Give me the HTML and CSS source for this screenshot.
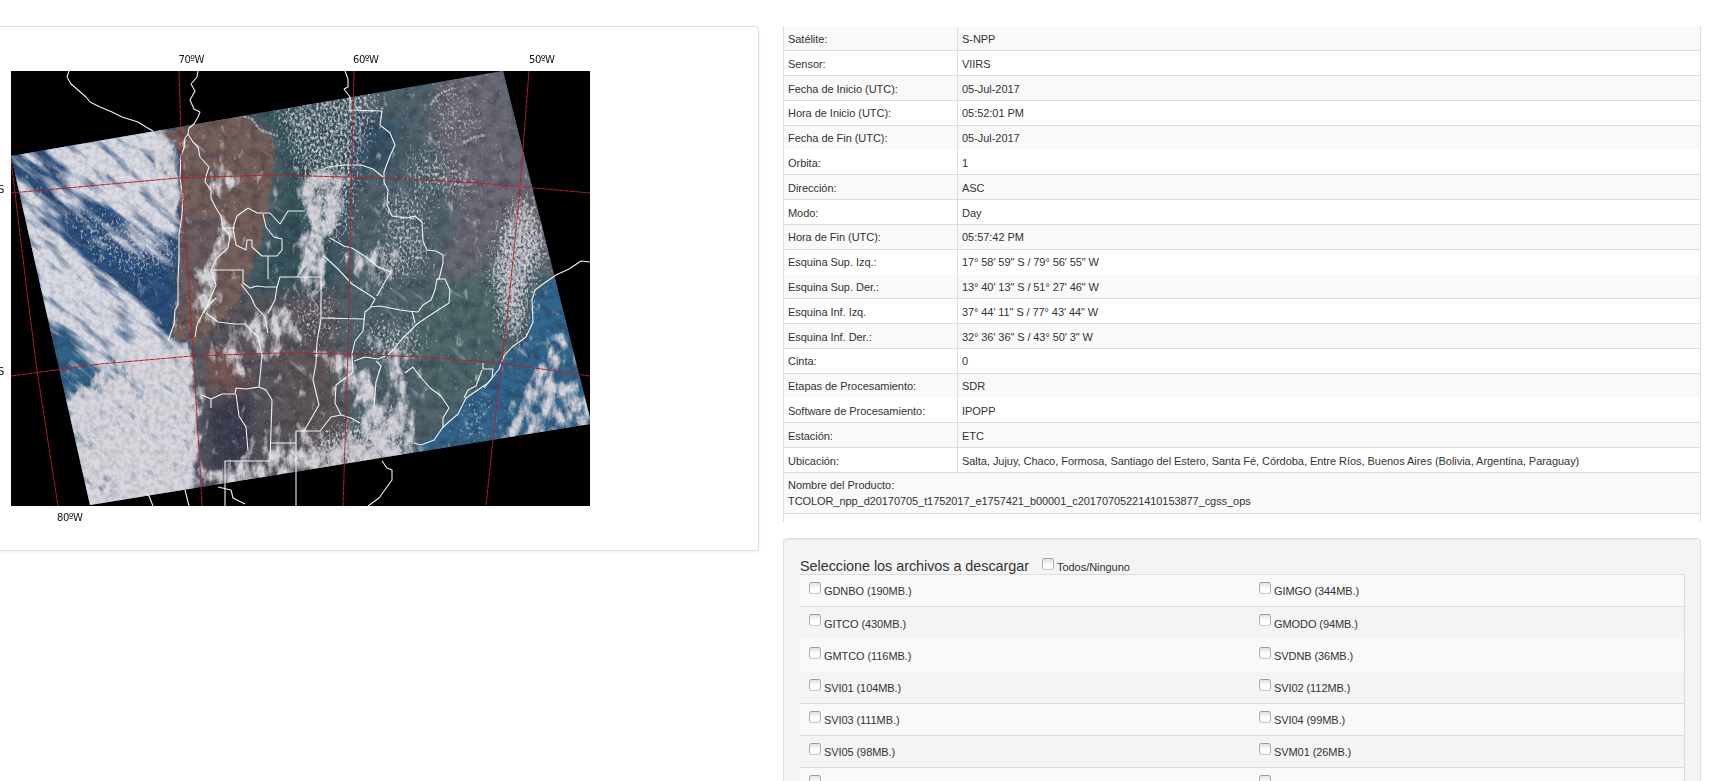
FILE: index.html
```
<!DOCTYPE html>
<html lang="es">
<head>
<meta charset="utf-8">
<title>Detalle del producto</title>
<link rel="stylesheet" href="styles.css">
</head>
<body>
<main class="page">
<section class="preview">
<svg class="map" viewBox="0 27 758 523" width="758" height="523">
  <defs>
    <clipPath id="swath"><path d="M11 156 503 71 590 418V424L90 505Z"/></clipPath>
    <clipPath id="frame"><path d="M11 71H590V506H11Z"/></clipPath>
    <filter id="soft" x="-10%" y="-10%" width="120%" height="120%"><feGaussianBlur stdDeviation="7"/></filter>
    <filter id="edge" x="-5%" y="-5%" width="110%" height="110%"><feTurbulence type="fractalNoise" baseFrequency=".15" numOctaves="3" seed="4"/><feDisplacementMap in="SourceGraphic" scale="9" xChannelSelector="R" yChannelSelector="G"/></filter>
    <filter id="wisps" filterUnits="userSpaceOnUse" x="-50" y="-250" width="750" height="850" color-interpolation-filters="sRGB">
      <feGaussianBlur in="SourceAlpha" stdDeviation="6" result="d"/>
      <feTurbulence type="fractalNoise" baseFrequency=".025 .1" numOctaves="6" seed="8" result="n"/>
      <feComposite in="d" in2="n" operator="arithmetic" k2=".66" k3="1" k4="-.2"/>
      <feColorMatrix values="0 0 0 0 .86  0 0 0 0 .86  0 0 0 0 .89  0 0 0 2.5 -1.35"/>
    </filter>
    <filter id="cloud" filterUnits="userSpaceOnUse" x="0" y="60" width="600" height="460" color-interpolation-filters="sRGB">
      <feGaussianBlur in="SourceAlpha" stdDeviation="5" result="d"/>
      <feTurbulence type="fractalNoise" baseFrequency=".11 .06" numOctaves="6" seed="8" result="n"/>
      <feComposite in="d" in2="n" operator="arithmetic" k2=".6" k3="1.25" k4="-.3"/>
      <feColorMatrix values="0 0 0 0 .85  0 0 0 0 .84  0 0 0 0 .86  0 0 0 2.5 -1.4"/>
    </filter>
    <filter id="speck" filterUnits="userSpaceOnUse" x="0" y="60" width="600" height="460" color-interpolation-filters="sRGB">
      <feGaussianBlur in="SourceAlpha" stdDeviation="9" result="d"/>
      <feTurbulence type="fractalNoise" baseFrequency=".42 .3" numOctaves="4" seed="21" result="n"/>
      <feComposite in="d" in2="n" operator="arithmetic" k2=".55" k3="1" k4="-.1"/>
      <feColorMatrix values="0 0 0 0 .8  0 0 0 0 .79  0 0 0 0 .81  0 0 0 3 -1.85"/>
    </filter>
    <filter id="grain" filterUnits="userSpaceOnUse" x="0" y="60" width="600" height="460" color-interpolation-filters="sRGB">
      <feTurbulence type="fractalNoise" baseFrequency=".1" numOctaves="6" seed="3"/>
      <feColorMatrix values="0 0 0 0 .12  0 0 0 0 .13  0 0 0 0 .18  0 2.4 0 0 -.95"/>
    </filter>
    <filter id="haze" filterUnits="userSpaceOnUse" x="0" y="60" width="600" height="460" color-interpolation-filters="sRGB">
      <feTurbulence type="fractalNoise" baseFrequency=".2" numOctaves="4" seed="15"/>
      <feColorMatrix values="0 0 0 0 .38  0 0 0 0 .42  0 0 0 0 .52  0 3 0 0 -1.2"/>
    </filter>
  </defs>

  <rect x="11" y="71" width="579" height="435" fill="#000"/>
  <g clip-path="url(#swath)">
    <rect x="0" y="60" width="600" height="460" fill="#4f636b"/>
    <g filter="url(#soft)">
      <path fill="#274d7c" d="M0 60H180V340L195 520H0Z"/>
      <path fill="#2d6288" d="M40 320 170 350 130 420 60 420Z"/>
      <path fill="#36525a" d="M235 100 340 80 360 100 360 180 330 300 250 300 285 190 275 130Z"/>
      <path fill="#334f62" d="M350 115 400 120 390 170 350 165Z"/>
      <path fill="#6c6a73" d="M440 75 505 65 560 280 510 225 475 290 435 280 455 220 430 120Z"/>
      <path fill="#4d6769" d="M420 290 520 260 500 380 430 420 400 340Z"/>
      <path fill="#5c575c" d="M200 300 340 290 340 480 200 500Z"/>
      <path fill="#5e5455" d="M275 355 335 350 345 430 290 440Z"/>
      <path fill="#3b3a4e" d="M208 400 255 390 252 465 210 480Z"/>
      <path fill="#775650" d="M205 345 235 355 250 385 228 398 205 385Z"/>
    </g>
    <g filter="url(#edge)">
      <path fill="#775f58" d="M156 132 240 112 262 128 275 140 270 200 260 245 248 278 238 298 222 320 200 340 190 345 182 340 170 342 178 300 182 150Z"/>
      <path fill="#6d5b5b" d="M183 210 220 220 210 300 175 330Z"/>
      <path fill="#2f658c" d="M600 276 565 272 540 287 532 295 530 325 522 342 502 358 485 384 464 401 440 430 420 446 395 500 600 500Z"/>
    </g>
    <rect filter="url(#grain)" x="0" y="60" width="600" height="460" opacity=".35"/>
    <g transform="rotate(38)" filter="url(#wisps)">
      <g transform="rotate(-38)">
        <path d="M40 130 155 118 176 150 178 235 160 240 138 228 105 206 70 180Z"/>
        <path opacity=".58" d="M0 140 100 130 130 205 60 210 15 215Z"/>
        <path opacity=".5" d="M60 205 180 220 176 270 100 250Z"/>
        <path d="M10 205 60 210 68 245 105 275 145 305 172 340 190 350 192 385 160 378 120 362 80 342 45 325 30 270Z"/>
        <path opacity=".62" d="M75 335 140 345 150 400 60 400Z"/>
        <path d="M65 400 120 390 150 355 190 345 196 480 190 515 80 525Z"/>
        <path d="M65 405 120 390 150 355 188 350 194 470 190 515 80 525Z"/>
      </g>
    </g>
    <g filter="url(#cloud)">
      <path d="M125 350 192 345 200 400 200 505 100 520 60 410Z"/>
      <path d="M150 130 178 148 177 215 164 215Z"/>
      <path d="M210 160 239 176 237 195 214 192Z"/>
      <path d="M212 215 234 225 232 245 214 270 220 300 205 330 194 300 200 268 220 242Z"/>
      <path d="M298 168 347 175 339 225 325 245 322 295 304 298 296 260 306 235Z"/>
      <path opacity=".9" d="M306 185 336 185 332 225 320 240 312 235Z"/>
      <path opacity=".8" d="M222 330 270 308 302 312 302 345 265 358 245 345Z"/>
      <path opacity=".8" d="M215 340 240 345 247 380 235 375 215 358Z"/>
      <path opacity=".55" d="M260 375 310 390 315 425 270 430 245 455 200 480 240 495 320 475 320 410Z"/>
      <path opacity=".5" d="M210 470 300 440 320 470 220 495Z"/>
      <path d="M310 350 345 355 372 378 376 395 395 420 408 470 315 495 312 455 365 430 350 390Z"/>
      <path opacity=".65" d="M370 240 400 255 385 290 360 275Z"/>
      <path opacity=".6" d="M340 240 365 260 375 285 350 270Z"/>
      <path opacity=".75" d="M375 340 408 350 410 400 420 455 390 465 392 400Z"/>
      <path opacity=".78" d="M560 305 570 340 560 370 595 390 595 425 540 440 495 445 520 400 535 365 555 345Z"/>
    </g>
    <g filter="url(#speck)">
      <path opacity=".6" d="M270 105 360 80 385 85 360 170 350 240 310 240 300 180Z"/>
      <path opacity=".5" d="M405 150 435 150 470 165 480 200 450 200 410 190Z"/>
      <path opacity=".55" d="M380 185 430 200 425 235 435 270 370 290 385 215Z"/>
      <path opacity=".9" d="M503 215 530 190 549 250 530 285 524 345 503 335 489 270Z"/>
      <path opacity=".55" d="M360 325 420 315 420 365 370 360Z"/>
      <path opacity=".42" d="M285 300 330 280 340 340 300 345Z"/>
      <path opacity=".38" d="M430 85 470 85 490 145 430 145Z"/>
      <path opacity=".48" d="M465 405 490 385 480 440 460 445Z"/>
      <path opacity=".7" d="M308 440 400 400 415 460 310 480Z"/>
      <path opacity=".45" d="M60 205 150 220 178 235 176 270 130 280 80 240Z"/>
    </g>
    <path filter="url(#haze)" d="M0 60H600V520H0Z" opacity=".2"/>
    <g class="streak"><path d="M240 115 252 119 260 130 278 136"/><path d="M430 105 438 95 453 88"/><path d="M463 143 475 137 486 135"/></g>
  </g>

  <g class="borders" clip-path="url(#frame)">
    <path d="M69 71 67 77 71 84 78 90 86 97 90 102 100 107 112 112 122 117 138 122 146 127 153 131"/>
    <path d="M198 71 197 77 191 84 195 91 190 100 194 109 200 112 198 117 194 124 189 128 188 134 193 142 198 147 200 157 209 167 206 176 205 182 211 190 211 198 216 208 221 216 223 228 230 235 228 248 217 258 211 270 216 285 204 313"/>
    <path d="M188 134 185 138 184 148 181 156 180 178 183 197 182 215 179 235 179 258 178 280 178 305 175 310 174 324 168 341"/>
    <path d="M345 71 348 79 348 87 344 89 350 97 350 110 382 111 380 125 390 133 395 145 390 156 384 172 384 182 388 190 387 205 392 216 407 218 415 216 422 222 423 241 427 250 436 251 443 255 443 263 439 279 437 279 435 290 431 300 423 305 418 312 408 311 400 310 380 306 371 307"/>
    <path d="M321 170 328 167 344 165 361 165 373 169 383 177"/>
    <path d="M437 279 445 279 450 290 449 303 435 312 426 318 417 324 409 332 401 340 393 350 388 355 378 359 365 357 354 361"/>
    <path d="M412 311 415 323"/><path d="M248 208 257 213 270 213 280 224 288 211 305 211"/>
    <path d="M248 208 237 216 233 228 236 245 246 250 247 240 252 240 252 247 262 256 277 256 282 250 282 239 274 237 266 227 263 214"/>
    <path d="M222 228 235 228M212 270 243 270 243 283 250 288 257 286 265 287 277 287 280 277 297 277 322 277M268 256 268 279M297 277 307 263M321 277V318L317 342 316 363 313 380 319 405 304 431"/>
    <path d="M330 238 344 246 352 248 366 257 378 267 391 272M324 256 337 268 352 284 371 296 375 299 370 308 365 312 363 331 355 341 352 354 353 372M391 272 386 280 377 296M321 318 365 319M353 372 344 379 336 385 335 403 341 415 331 417 320 431H296V506"/>
    <path d="M216 298 205 309 197 325 195 337M206 313 218 322 235 324 245 324 258 337 262 356 259 387M241 284 251 297 255 306 265 317 268 333M277 287 275 300 268 313M202 395 211 399 222 394 235 394 236 388 246 389 259 387 266 390 272 400 270 460M270 443H296M270 461H225V506M236 394 239 416 246 427 248 451M211 399V408"/>
    <path d="M376 361 381 366 376 382 374 406M341 415 351 418 360 423M405 373 413 367 418 374 430 388 441 396 449 408 443 418 443 428"/>
    <path d="M590 262 581 261 569 269 556 275 543 284 535 290 532 300 533 322 526 337 512 347 504 356 499 369 488 383 466 398 458 414 443 427 434 440 421 445 414 443"/>
    <path d="M483 363 483 369 493 369 492 378 484 388M482 370 476 386 468 390 464 398M145 493 149 496 153 506M185 490 189 506M218 487 231 490 233 498 245 504M382 461 387 468 392 470 392 480 379 498 368 506"/>
  </g>
  <g class="grid" clip-path="url(#frame)">
    <path d="M179 71 183 200 190 300 199 450 202 506M354 71 351 200 348 350 343 506M529 71 519 200 509 300 494 430 486 506M11 160 28 300 37 370 58 506"/>
    <path d="M11 193 100 185 178 178 270 175 385 178 480 183 590 193M11 376 100 364 192 356 280 353 350 354 420 357 500 363 590 376"/>
  </g>
  <g class="axis">
    <text x="178.500" y="63" textLength="26">70ºW</text>
    <text x="353" y="63" textLength="26">60ºW</text>
    <text x="529" y="63" textLength="26">50ºW</text>
    <text x="57" y="521" textLength="26">80ºW</text>
    <text x="-2" y="193">S</text>
    <text x="-2" y="375">S</text>
  </g>
</svg>
</section>

<section class="details">
  <dl class="info">
    <div class="row"><dt>Satélite:</dt><dd>S-NPP</dd></div>
    <div class="row"><dt>Sensor:</dt><dd>VIIRS</dd></div>
    <div class="row"><dt>Fecha de Inicio (UTC):</dt><dd>05-Jul-2017</dd></div>
    <div class="row"><dt>Hora de Inicio (UTC):</dt><dd>05:52:01 PM</dd></div>
    <div class="row"><dt>Fecha de Fin (UTC):</dt><dd>05-Jul-2017</dd></div>
    <div class="row plain"><dt>Orbita:</dt><dd>1</dd></div>
    <div class="row"><dt>Dirección:</dt><dd>ASC</dd></div>
    <div class="row"><dt>Modo:</dt><dd>Day</dd></div>
    <div class="row"><dt>Hora de Fin (UTC):</dt><dd>05:57:42 PM</dd></div>
    <div class="row"><dt>Esquina Sup. Izq.:</dt><dd class="coords">17° 58' 59" S / 79° 56' 55" W</dd></div>
    <div class="row plain"><dt>Esquina Sup. Der.:</dt><dd class="coords">13° 40' 13" S / 51° 27' 46" W</dd></div>
    <div class="row"><dt>Esquina Inf. Izq.</dt><dd class="coords">37° 44' 11" S / 77° 43' 44" W</dd></div>
    <div class="row"><dt>Esquina Inf. Der.:</dt><dd class="coords">32° 36' 36" S / 43° 50' 3" W</dd></div>
    <div class="row"><dt>Cinta:</dt><dd>0</dd></div>
    <div class="row"><dt>Etapas de Procesamiento:</dt><dd>SDR</dd></div>
    <div class="row plain"><dt>Software de Procesamiento:</dt><dd>IPOPP</dd></div>
    <div class="row"><dt>Estación:</dt><dd>ETC</dd></div>
    <div class="row"><dt>Ubicación:</dt><dd>Salta, Jujuy, Chaco, Formosa, Santiago del Estero, Santa Fé, Córdoba, Entre Ríos, Buenos Aires (Bolivia, Argentina, Paraguay)</dd></div>
    <div class="product"><dt>Nombre del Producto:</dt><dd>TCOLOR_npp_d20170705_t1752017_e1757421_b00001_c20170705221410153877_cgss_ops</dd></div>
    <div class="tail"></div>
  </dl>

  <form class="well">
    <div class="heading"><h2>Seleccione los archivos a descargar</h2><label><input type="checkbox"><span>Todos/Ninguno</span></label></div>
    <div class="files">
      <div class="pair"><label><input type="checkbox"><span>GDNBO (190MB.)</span></label><label><input type="checkbox"><span>GIMGO (344MB.)</span></label></div>
      <div class="pair"><label><input type="checkbox"><span>GITCO (430MB.)</span></label><label><input type="checkbox"><span>GMODO (94MB.)</span></label></div>
      <div class="pair plain"><label><input type="checkbox"><span>GMTCO (116MB.)</span></label><label><input type="checkbox"><span>SVDNB (36MB.)</span></label></div>
      <div class="pair plain"><label><input type="checkbox"><span>SVI01 (104MB.)</span></label><label><input type="checkbox"><span>SVI02 (112MB.)</span></label></div>
      <div class="pair"><label><input type="checkbox"><span>SVI03 (111MB.)</span></label><label><input type="checkbox"><span>SVI04 (99MB.)</span></label></div>
      <div class="pair"><label><input type="checkbox"><span>SVI05 (98MB.)</span></label><label><input type="checkbox"><span>SVM01 (26MB.)</span></label></div>
      <div class="pair"><label><input type="checkbox"><span>SVM02 (26MB.)</span></label><label><input type="checkbox"><span>SVM03 (26MB.)</span></label></div>
    </div>
  </form>
</section>
</main>
</body>
</html>
```
FILE: styles.css
```
* { box-sizing: border-box; }
html, body { height: 100%; overflow: hidden; }
body {
  margin: 0;
  background: #fff;
  color: #333;
  font: 11px/16px "Liberation Sans", Arial, sans-serif;
  letter-spacing: -.04px;
}
.page {
  display: flex;
  align-items: flex-start;
  gap: 24px;
  height: 781px;
}
.preview {
  flex: none;
  width: 759px;
  height: 525px;
  margin-top: 26px;
  border: 1px solid #ddd;
  border-left: 0;
  border-radius: 0 4px 4px 0;
  box-shadow: 0 1px 3px rgba(0, 0, 0, .075);
}
.map { display: block; }
.borders path { fill: none; stroke: #eef4f4; stroke-width: 1.1; stroke-linejoin: bevel; }
.grid path { fill: none; stroke: #b51f2c; stroke-width: 1; stroke-dasharray: 5 .6; }
.streak path { fill: none; stroke: #cfd3d5; stroke-width: 2.5; stroke-dasharray: 2 1 4 1; opacity: .6; }
.axis text { font: 10px "DejaVu Sans", sans-serif; letter-spacing: 0; fill: #111; }

.details { flex: none; width: 918px; padding-top: 25.6px; }
.info { margin: 0; border: solid #ddd; border-width: 0 1px; }
.info dd { margin: 0; }
.row {
  display: grid;
  grid-template-columns: 173px 1fr;
  height: 24.8px;
  border-top: 1px solid #ddd;
}
.row:first-child, .row.plain { border-top-color: transparent; }
.row:nth-child(odd), .product { background: #f9f9f9; }
.row dt, .row dd { padding: 4.4px 4px 0; }
.row dd { border-left: 1px solid #ddd; white-space: nowrap; }
.row .coords { letter-spacing: -.09px; }
.product { height: 41px; padding: 4.4px 4px 0; border-top: 1px solid #ddd; }
.product dd { letter-spacing: -.07px; }
.tail { height: 8.6px; border-top: 1px solid #ddd; }

.well {
  height: 260px;
  margin: 16.4px 0 0;
  padding: 19px 15px 0 16px;
  border: 1px solid #e0e0e0;
  border-radius: 4px 4px 0 0;
  background: #f4f4f4;
  box-shadow: inset 0 1px 1px rgba(0, 0, 0, .05);
}
.heading { display: flex; height: 16.2px; }
.heading h2 { margin: 0 13px 0 0; font-size: 14.4px; font-weight: 400; line-height: 16px; white-space: nowrap; }
label { display: flex; align-items: flex-start; gap: 3px; }
input {
  appearance: none;
  width: 12px;
  height: 12px;
  margin: 0;
  border: 1px solid #b0b2aa;
  border-top-color: #999c91;
  border-bottom-color: #c9cac6;
  border-radius: 3px;
  background: linear-gradient(#e3e4e0, #fff 60%);
}
.heading span { padding-top: 1px; }
.files { border-right: 1px solid #ddd; }
.pair {
  display: grid;
  grid-template-columns: 450px 1fr;
  height: 32.2px;
  padding: 7.2px 9px 0;
  border-top: 1px solid #ddd;
}
.pair span { padding-top: 1.1px; letter-spacing: -.08px; }
.pair:nth-child(odd) { background: #f9f9f9; }
.pair.plain { border-top-color: transparent; }
```
